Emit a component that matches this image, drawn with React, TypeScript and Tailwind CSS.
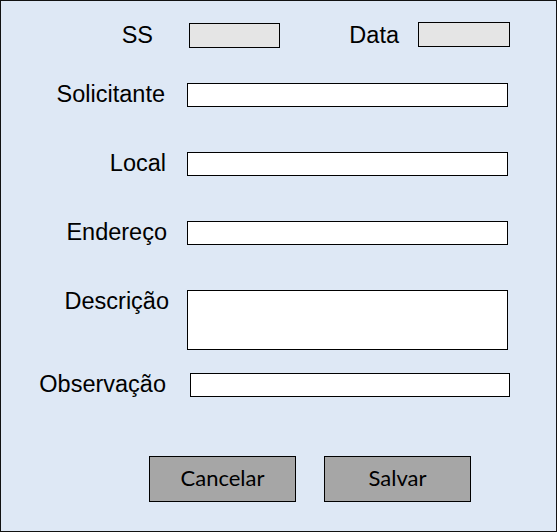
import React from "react";

const labelCls =
  "shrink-0 text-right text-[23.5px] leading-[28px] text-black font-['Liberation_Sans',Arial,sans-serif]";

function Row({
  label,
  labelW,
  ml,
  inputW,
  inputH,
  mt,
}: {
  label: string;
  labelW: string;
  ml: string;
  inputW: string;
  inputH: string;
  mt: string;
}) {
  return (
    <div className={`flex items-start ${mt}`}>
      <div className={`${labelCls} ${labelW}`}>{label}</div>
      <div className={`mt-[3px] border border-black bg-white ${ml} ${inputW} ${inputH}`} />
    </div>
  );
}

export default function App() {
  return (
    <div className="w-[557px] h-[532px] border border-[#111] bg-[#dee8f5] flex flex-col">
      <div className="flex items-start mt-[20px]">
        <div className={`${labelCls} w-[152px]`}>SS</div>
        <div className="mt-[2px] ml-[36px] w-[91px] h-[25px] border border-black bg-[#e5e5e5]" />
        <div className={`${labelCls} w-[119px]`}>Data</div>
        <div className="mt-[1px] ml-[19px] w-[92px] h-[25px] border border-black bg-[#e5e5e5]" />
      </div>
      <Row label="Solicitante" labelW="w-[164px]" ml="ml-[22px]" inputW="w-[321px]" inputH="h-[24px]" mt="mt-[31px]" />
      <Row label="Local" labelW="w-[165px]" ml="ml-[21px]" inputW="w-[321px]" inputH="h-[24px]" mt="mt-[41px]" />
      <Row label="Endereço" labelW="w-[166px]" ml="ml-[20px]" inputW="w-[321px]" inputH="h-[24px]" mt="mt-[41px]" />
      <Row label="Descrição" labelW="w-[168px]" ml="ml-[18px]" inputW="w-[321px]" inputH="h-[60px]" mt="mt-[41px]" />
      <Row label="Observação" labelW="w-[165px]" ml="ml-[24px]" inputW="w-[320px]" inputH="h-[24px]" mt="mt-[20px]" />
      <div className="flex mt-[58px]">
        <button className="ml-[148px] w-[147px] h-[46px] border border-black bg-[#a6a6a6] text-[22px] leading-none pb-[3px] text-black font-['Lato',sans-serif] flex items-center justify-center">
          Cancelar
        </button>
        <button className="ml-[28px] w-[147px] h-[46px] border border-black bg-[#a6a6a6] text-[22px] leading-none pb-[3px] text-black font-['Lato',sans-serif] flex items-center justify-center">
          Salvar
        </button>
      </div>
    </div>
  );
}
